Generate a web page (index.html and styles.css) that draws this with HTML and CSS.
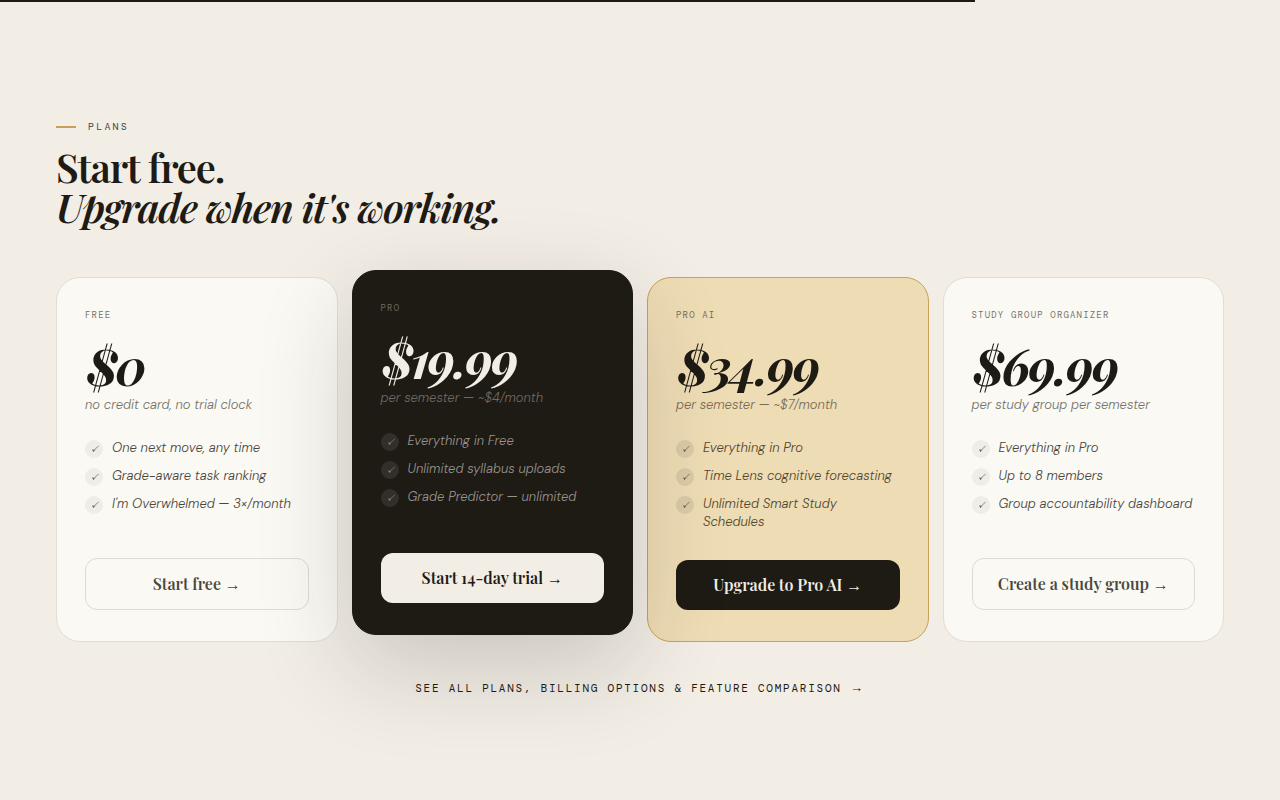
FILE: index.html
```html
<!DOCTYPE html>
<html lang="en">
<head>
    <meta charset="UTF-8">
    <meta name="viewport" content="width=device-width, initial-scale=1.0">
    <title>Plans</title>
    <link rel="stylesheet" href="styles.css">
</head>
<body>
    <div class="progress"></div>

    <!-- Shared tick for the feature lists -->
    <svg class="defs" aria-hidden="true">
        <symbol id="tick" viewBox="0 0 18 18">
            <path d="M7.2 9.8 L8.2 9.3 L8.8 10.6 C10.2 8.6 11.8 7 13.9 5.7 L14 6 C11.9 7.6 10.3 9.4 8.8 11.7 L8.4 11.7 Z" fill="currentColor"/>
        </symbol>
    </svg>

    <section class="plans">
        <div class="eyebrow">Plans</div>
        <h2 class="title">Start free.<br><em>Upgrade when it's working.</em></h2>

        <div class="grid">
            <div class="card">
                <div class="name">Free</div>
                <div class="price">$0</div>
                <div class="period">no credit card, no trial clock</div>
                <ul class="features">
                    <li><svg class="tick"><use href="#tick"/></svg><span>One next move, any time</span></li>
                    <li><svg class="tick"><use href="#tick"/></svg><span>Grade-aware task ranking</span></li>
                    <li><svg class="tick"><use href="#tick"/></svg><span>I'm Overwhelmed — 3×/month</span></li>
                </ul>
                <button class="btn btn-outline">Start free <span class="arrow">→</span></button>
            </div>

            <div class="card card-pro">
                <div class="name">Pro</div>
                <div class="price">$19.99</div>
                <div class="period">per semester — ~$4/month</div>
                <ul class="features">
                    <li><svg class="tick"><use href="#tick"/></svg><span>Everything in Free</span></li>
                    <li><svg class="tick"><use href="#tick"/></svg><span>Unlimited syllabus uploads</span></li>
                    <li><svg class="tick"><use href="#tick"/></svg><span>Grade Predictor — unlimited</span></li>
                </ul>
                <button class="btn btn-light">Start 14-day trial <span class="arrow">→</span></button>
            </div>

            <div class="card card-ai">
                <div class="name">Pro AI</div>
                <div class="price">$34.99</div>
                <div class="period">per semester — ~$7/month</div>
                <ul class="features">
                    <li><svg class="tick"><use href="#tick"/></svg><span>Everything in Pro</span></li>
                    <li><svg class="tick"><use href="#tick"/></svg><span>Time Lens cognitive forecasting</span></li>
                    <li><svg class="tick"><use href="#tick"/></svg><span>Unlimited Smart Study Schedules</span></li>
                </ul>
                <button class="btn btn-dark">Upgrade to Pro AI <span class="arrow">→</span></button>
            </div>

            <div class="card">
                <div class="name">Study Group Organizer</div>
                <div class="price">$69.99</div>
                <div class="period">per study group per semester</div>
                <ul class="features">
                    <li><svg class="tick"><use href="#tick"/></svg><span>Everything in Pro</span></li>
                    <li><svg class="tick"><use href="#tick"/></svg><span>Up to 8 members</span></li>
                    <li><svg class="tick"><use href="#tick"/></svg><span>Group accountability dashboard</span></li>
                </ul>
                <button class="btn btn-outline">Create a study group <span class="arrow">→</span></button>
            </div>
        </div>

        <div class="more">
            <a href="#">See all plans, billing options &amp; feature comparison <span class="arrow">→</span></a>
        </div>
    </section>
</body>
</html>
```

FILE: styles.css
```css
:root {
    --bg: #f2ede5;
    --ink: #1e1a14;
    --mid: #4a473e;
    --muted: #77736a;
    --gold: #c8a05a;
    --serif: "Playfair Display", "Liberation Serif", serif;
    --sans: "DM Sans", Inter, sans-serif;
    --mono: "DM Mono", "Liberation Mono", monospace;
}
* {
    box-sizing: border-box;
}
body {
    margin: 0;
    background: var(--bg);
    color: var(--ink);
    font-family: var(--sans);
}
.defs {
    display: none;
}
.progress {
    position: fixed;
    top: 0;
    left: 0;
    width: 76.2%;
    height: 2px;
    background: var(--ink);
}
.plans {
    padding: 120px 56px 100px;
}
.eyebrow {
    display: flex;
    align-items: center;
    gap: 12px;
    font: 10px/14px var(--mono);
    letter-spacing: 0.22em;
    text-transform: uppercase;
    color: var(--mid);
}
.eyebrow::before {
    content: "";
    width: 20px;
    height: 2px;
    background: var(--gold);
}
.title {
    margin: 13px 0 50px;
    font: 600 40px/40px var(--serif);
    letter-spacing: -0.03em;
}

/* Cards */
.grid {
    display: grid;
    grid-template-columns: repeat(4, minmax(0, 1fr));
    gap: 14px;
}
.card {
    display: flex;
    flex-direction: column;
    min-height: 365px;
    padding: 31px 28px;
    background: #faf9f4;
    border: 1px solid #e2ddd3;
    border-radius: 24px;
}
.card-pro {
    position: relative;
    z-index: 1;
    transform: translateY(-7px);
    background: var(--ink);
    border-color: var(--ink);
    color: var(--bg);
    box-shadow: 0 32px 96px rgba(30, 26, 20, 0.19);
}
.card-ai {
    background: #eedcb5;
    border-color: var(--gold);
}
.name {
    font: 9px/12px var(--mono);
    letter-spacing: 0.13em;
    text-transform: uppercase;
    color: var(--muted);
}
.price {
    margin: 19px 0 4px;
    padding-left: 2px;
    font: italic 700 50px/52px var(--serif);
    letter-spacing: -2px;
}
.period {
    font: italic 300 13px/18px var(--sans);
    color: var(--muted);
}
.features {
    display: flex;
    flex-direction: column;
    gap: 10px;
    margin: 25px 0 28px;
    padding: 0;
    list-style: none;
    font: italic 300 13px/18px var(--sans);
    color: var(--mid);
}
.features li {
    display: flex;
    gap: 9px;
}
.tick {
    flex: none;
    width: 18px;
    height: 18px;
    margin: 1px 0 -1px;
    border-radius: 50%;
    background: rgba(30, 26, 20, 0.05);
}
.card-pro .name,
.card-pro .period {
    color: #6d6a64;
}
.card-pro .features {
    color: #96938c;
}
.card-pro .tick {
    background: rgba(255, 255, 255, 0.09);
}
.card-ai .name,
.card-ai .period {
    color: #786c55;
}
.card-ai .features {
    color: #51472f;
}
.card-ai .tick {
    background: rgba(30, 26, 20, 0.09);
}

/* Buttons */
.btn {
    margin-top: auto;
    padding: 14px 12px;
    border: 0;
    border-radius: 12px;
    font: 600 16px/22px var(--serif);
    cursor: pointer;
}
.btn-outline {
    background: transparent;
    border: 1px solid #dedbd1;
    color: var(--mid);
}
.btn-light {
    background: var(--bg);
    color: var(--ink);
}
.btn-dark {
    background: var(--ink);
    color: var(--bg);
}
.arrow {
    font-family: "Liberation Serif", serif;
    font-size: 16px;
    font-weight: 400;
    line-height: 1;
}

.more {
    position: relative;
    z-index: 2;
    margin-top: 38px;
    font-size: 11px;
    line-height: 16px;
    text-align: center;
}
.more a {
    font-family: var(--mono);
    letter-spacing: 0.16em;
    text-transform: uppercase;
    text-decoration: none;
    color: var(--ink);
}
.more .arrow {
    font-size: 13px;
}
```
